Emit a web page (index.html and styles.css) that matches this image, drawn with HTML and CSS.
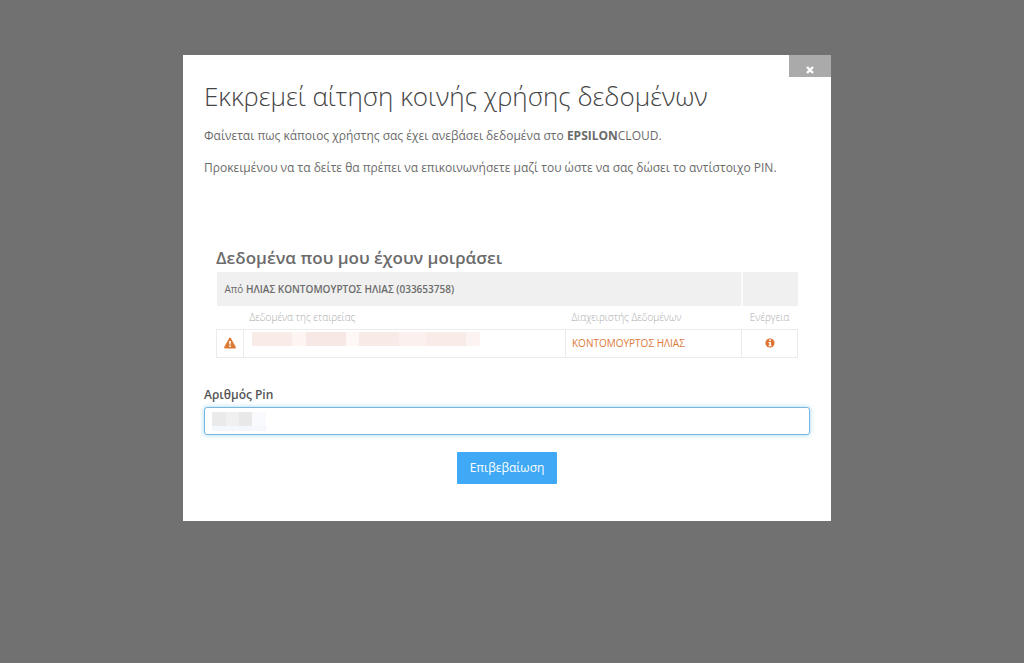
FILE: index.html
```html
<!DOCTYPE html>
<html lang="el">
<head>
    <meta charset="UTF-8">
    <meta name="viewport" content="width=device-width, initial-scale=1.0">
    <title>Κοινή χρήση δεδομένων</title>
    <link rel="stylesheet" href="styles.css">
</head>
<body>
    <div class="overlay">
        <div class="modal" role="dialog" aria-labelledby="modalTitle">
            <button type="button" class="close-btn" aria-label="Κλείσιμο">
                <svg viewBox="0 0 8 8" width="8" height="8"><path d="M1 1l6 6M7 1L1 7" stroke="#fff" stroke-width="2.400"/></svg>
            </button>

            <h1 id="modalTitle">Εκκρεμεί αίτηση κοινής χρήσης δεδομένων</h1>
            <p>Φαίνεται πως κάποιος χρήστης σας έχει ανεβάσει δεδομένα στο <strong>EPSILON</strong>CLOUD.</p>
            <p>Προκειμένου να τα δείτε θα πρέπει να επικοινωνήσετε μαζί του ώστε να σας δώσει το αντίστοιχο PIN.</p>

            <section class="shared">
                <h2>Δεδομένα που μου έχουν μοιράσει</h2>
                <table class="shared-table">
                    <colgroup>
                        <col class="col-icon">
                        <col>
                        <col class="col-admin">
                        <col class="col-action">
                    </colgroup>
                    <thead>
                        <tr class="group-row">
                            <td colspan="3">Από <strong>ΗΛΙΑΣ ΚΟΝΤΟΜΟΥΡΤΟΣ ΗΛΙΑΣ (033653758)</strong></td>
                            <td></td>
                        </tr>
                        <tr class="head-row">
                            <td></td>
                            <th scope="col">Δεδομένα της εταιρείας</th>
                            <th scope="col">Διαχειριστής Δεδομένων</th>
                            <th scope="col" class="center">Ενέργεια</th>
                        </tr>
                    </thead>
                    <tbody>
                        <tr class="data-row">
                            <td class="center">
                                <svg class="icon" viewBox="0 0 12 12" width="12" height="12"><path d="M5.2 1Q6 -.2 6.800 1L11.800 10Q12.200 11.300 11 11.500H1Q-.2 11.300 .2 10Z" fill="#dd7a36"/><path d="M5.100 4h1.800l-.3 3.800H5.400ZM5.200 8.600h1.600v1.500H5.200Z" fill="#fff"/></svg>
                            </td>
                            <td class="name-cell"><span class="masked-name"></span></td>
                            <td>ΚΟΝΤΟΜΟΥΡΤΟΣ ΗΛΙΑΣ</td>
                            <td class="center">
                                <button type="button" class="info-btn" aria-label="Πληροφορίες">
                                    <svg class="icon" viewBox="0 0 10 10" width="10" height="10"><circle cx="5" cy="5" r="4.600" fill="#dd7433"/><path d="M4.200 1.600h1.700v1.400H4.200ZM3.500 3.900h2.400v3.300h.7v1H3.500v-1h.8V4.900h-.8Z" fill="#fff"/></svg>
                                </button>
                            </td>
                        </tr>
                    </tbody>
                </table>
            </section>

            <form>
                <label for="pin">Αριθμός Pin</label>
                <div class="pin-field">
                    <input type="text" id="pin" autocomplete="off">
                    <span class="masked-pin"></span>
                </div>
                <button type="submit" class="submit-btn">Επιβεβαίωση</button>
            </form>
        </div>
    </div>
</body>
</html>
```

FILE: styles.css
```css
:root {
    --text-color: #6b6b6b;
    --accent: #dd7a3c;
    --primary: #3fa9f5;
    --line: #ebebeb;
}

* {
    box-sizing: border-box;
    margin: 0;
    padding: 0;
}

body {
    min-height: 100vh;
    font-family: "Open Sans", "Noto Sans", sans-serif;
    font-size: 12px;
    line-height: 16px;
    color: var(--text-color);
    background: #717171;
}

button,
input {
    font: inherit;
}

svg {
    display: block;
}

.overlay {
    padding: 55px 10px 24px 0;
}

.modal {
    position: relative;
    width: 64%;
    min-width: 600px;
    max-width: 648px;
    margin: 0 auto;
    padding: 23px 21px 37px;
    background: #fff;
}

.close-btn {
    position: absolute;
    top: 0;
    right: 0;
    display: flex;
    justify-content: center;
    width: 42px;
    height: 22px;
    padding-top: 11px;
    border: none;
    background: #aaa;
    cursor: pointer;
}

h1 {
    margin-bottom: 14px;
    font-size: 26px;
    font-weight: 300;
    line-height: 36px;
    color: #444;
}

p {
    margin-bottom: 16px;
}

.shared {
    margin: 0 12px 29px;
    padding-top: 52px;
}

h2 {
    font-size: 17px;
    font-weight: 600;
    line-height: 28px;
}

.shared-table {
    width: 100%;
    table-layout: fixed;
    border-collapse: collapse;
}

.col-icon {
    width: 27px;
}

.col-admin {
    width: 176px;
}

.col-action {
    width: 56px;
}

.shared-table td,
.shared-table th {
    padding: 0 6px;
    text-align: left;
    white-space: nowrap;
}

.shared-table .center {
    padding: 0;
    text-align: center;
}

.group-row {
    height: 34px;
    background: #f0f0f0;
    font-size: 10px;
}

.shared-table .group-row td {
    padding-left: 8px;
}

.group-row td + td {
    border-left: 2px solid #fafafa;
}

.group-row strong {
    font-weight: 600;
}

.head-row {
    height: 23px;
    font-size: 10px;
    color: #aaa;
}

.head-row th {
    font-weight: 300;
}

.data-row {
    height: 28px;
    font-size: 10px;
    color: var(--accent);
}

.data-row td {
    border: 1px solid var(--line);
}

.data-row .name-cell {
    padding-bottom: 8px;
    padding-left: 8px;
}

.icon {
    margin: 0 auto;
}

.info-btn {
    display: block;
    margin: 0 auto;
    border: none;
    background: none;
    cursor: pointer;
}

.masked-name {
    display: block;
    width: 228px;
    height: 14px;
    background: linear-gradient(90deg, #f9ebe7 0 40px, #fcf5f2 40px 54px, #f8e8e5 54px 94px, #fdf8f6 94px 107px, #f8ebe7 107px 147px, #fbf0ed 147px 174px, #f9ebe8 174px 214px, #fcf4f2 214px);
}

label {
    display: block;
    margin-bottom: 4px;
    font-weight: 600;
    color: #555;
}

.pin-field {
    position: relative;
    margin-bottom: 17px;
}

.pin-field input {
    display: block;
    width: 100%;
    height: 28px;
    padding: 0 8px;
    border: 1px solid #78b8df;
    border-radius: 3px;
    box-shadow: 0 0 5px #a5d6f5;
    outline: none;
}

.masked-pin {
    position: absolute;
    top: 5px;
    left: 8px;
    width: 54px;
    height: 19px;
    background: linear-gradient(90deg, #eaeaea 0 14px, #f0f0f0 14px 27px, #e8e8e8 27px 40px, #f8fafd 40px) top / 100% 14px no-repeat #f4f8fd;
    pointer-events: none;
}

.submit-btn {
    display: block;
    margin: 0 auto;
    padding: 8px 13px;
    border: none;
    border-radius: 1px;
    background: var(--primary);
    color: #fff;
    cursor: pointer;
}
```
